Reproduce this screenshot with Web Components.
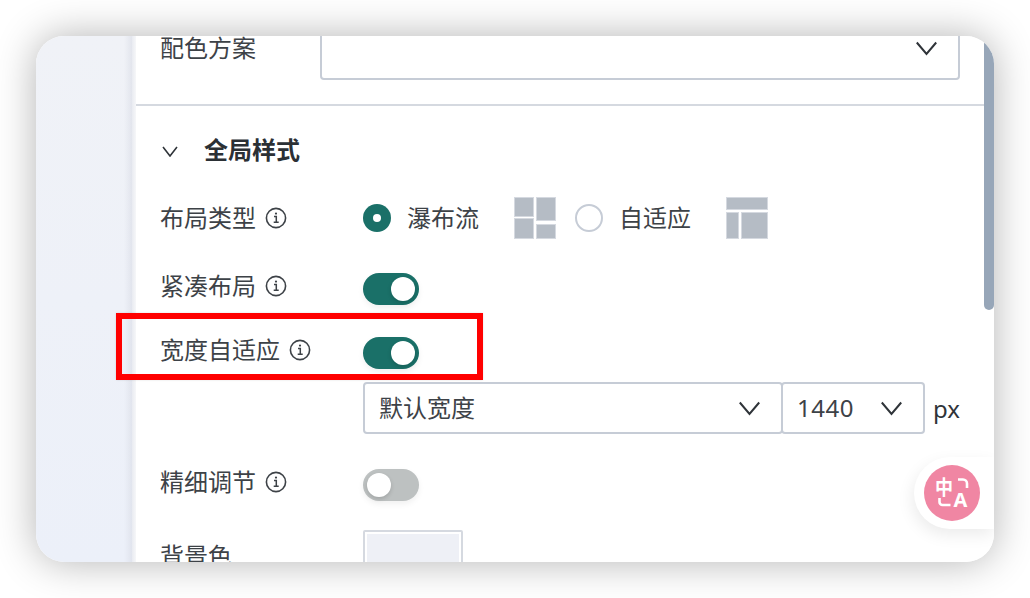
<!DOCTYPE html>
<html lang="zh">
<head>
<meta charset="utf-8">
<title>全局样式</title>
<style>
  html, body { margin: 0; padding: 0; background: #fff; }
  body { font-family: "Noto Sans", "Noto Sans CJK SC", sans-serif; color: #3d4247; overflow: hidden; width: 1030px; height: 598px; }
</style>
</head>
<body>
<app-window>
  <settings-panel>
    <config-row class="top" label="配色方案" style="--label-w:160px;--label-top:0px">
      <select-box width="640" height="64"></select-box>
    </config-row>
    <section-head title="全局样式"></section-head>
    <config-row label="布局类型" info style="--label-top:0px">
      <radio-option checked text="瀑布流">
        <svg width="42" height="42" viewBox="0 0 42 42">
          <g fill="#b5bcc5" stroke="#d5d9e0" stroke-width="1">
            <rect x=".5" y=".5" width="19" height="19"/>
            <rect x="22.5" y=".5" width="19" height="23"/>
            <rect x=".5" y="21.5" width="19" height="20"/>
            <rect x="22.5" y="27.5" width="19" height="14"/>
          </g>
        </svg>
      </radio-option>
      <radio-option text="自适应" style="margin-left:19px">
        <svg width="42" height="42" viewBox="0 0 42 42" style="margin-left:35px">
          <g fill="#b5bcc5" stroke="#d5d9e0" stroke-width="1">
            <rect x=".5" y=".5" width="41" height="12"/>
            <rect x=".5" y="15.5" width="12" height="26"/>
            <rect x="15.5" y="15.5" width="26" height="26"/>
          </g>
        </svg>
      </radio-option>
    </config-row>
    <config-row label="紧凑布局" info style="margin-top:33px"><toggle-switch on></toggle-switch></config-row>
    <config-row label="宽度自适应" info style="margin-top:32px"><toggle-switch on></toggle-switch></config-row>
    <config-row style="margin-top:13px">
      <select-box width="420" height="52" text="默认宽度"></select-box>
      <select-box width="144" height="52" text="1440" style="margin-left:-2px;letter-spacing:.5px"></select-box>
      <span style="margin-left:8px;font-size:24px;color:#2f3439">px</span>
    </config-row>
    <config-row label="精细调节" info style="margin-top:35px"><toggle-switch></toggle-switch></config-row>
    <config-row label="背景色" style="margin-top:29px;--label-top:0px"><color-swatch></color-swatch></config-row>
  </settings-panel>
  <translate-fab></translate-fab>
</app-window>
<mark-box></mark-box>

<script>
const CHEVRON = `<svg width="22" height="15" viewBox="0 0 22 15" fill="none" stroke="#2f3439" stroke-width="2"><path d="M.8 1.5 10.5 13 20.2 1.5"/></svg>`;

class AppWindow extends HTMLElement {
  constructor() { super(); this.attachShadow({ mode: 'open' }); }
  connectedCallback() {
    this.shadowRoot.innerHTML = `
    <style>
      :host { display: flex; position: absolute; left: 36px; top: 36px; width: 958px; height: 526px; border-radius: 28px; background: #fff; box-shadow: 0 0 40px rgba(0,0,0,.3); }
      .clip { display: flex; flex: 1; min-width: 0; border-radius: 28px; overflow: hidden; position: relative; }
      .rail { width: 96px; flex: none; background: linear-gradient(90deg, transparent 88px, rgba(215,218,228,.55) 96px), linear-gradient(#f0f2f7, #ecf0f9); }
      .main { flex: 1; min-width: 0; overflow: hidden; background: linear-gradient(90deg, #e9ebf1, #f6f7f9 4px, #fff 4px); padding-left: 4px; }
      .bar { width: 10px; flex: none; position: absolute; right: 0; top: 0; height: 274px; background: #97a6b8; border-radius: 0 0 5px 5px; }
    </style>
    <div class="clip">
      <div class="rail"></div>
      <div class="main"><slot></slot></div>
      <div class="bar"></div>
    </div>`;
  }
}

class SettingsPanel extends HTMLElement {
  constructor() { super(); this.attachShadow({ mode: 'open' }); }
  connectedCallback() {
    this.shadowRoot.innerHTML = `
    <style>
      :host { display: block; padding: 0 24px; margin-top: -20px; }
    </style>
    <slot></slot>`;
  }
}

class ConfigRow extends HTMLElement {
  constructor() { super(); this.attachShadow({ mode: 'open' }); }
  connectedCallback() {
    const label = this.getAttribute('label') || '';
    const info = this.hasAttribute('info') ? `<svg class="info" width="22" height="22" viewBox="0 0 22 22" fill="none" stroke="#3d4247"><circle cx="11" cy="11" r="9.6" stroke-width="1.6"/><path d="M9 9.6h2.3v5.4M8.7 15.2h5" stroke-width="1.5"/><circle cx="11" cy="6.6" r="1.1" fill="#3d4247" stroke="none"/></svg>` : '';
    this.shadowRoot.innerHTML = `
    <style>
      :host { display: flex; align-items: center; }
      .label { width: var(--label-w, 203px); flex: none; display: flex; align-items: center; gap: 9px; font-size: 24px; line-height: 32px; color: #3d4247; position: relative; top: var(--label-top, -3px); }
      .ctl { display: flex; align-items: center; flex: 1; min-width: 0; }
    </style>
    <div class="label">${label ? `<span>${label}</span>` : ''}${info}</div>
    <div class="ctl"><slot></slot></div>`;
    if (this.classList.contains('top')) {
      this.style.paddingBottom = '24px';
    }
  }
}

class SectionHead extends HTMLElement {
  constructor() { super(); this.attachShadow({ mode: 'open' }); }
  connectedCallback() {
    this.shadowRoot.innerHTML = `
    <style>
      :host { display: flex; align-items: center; height: 90px; margin: 0 -24px; padding: 0 24px; border-top: 2px solid #d5d9e0; box-sizing: content-box; }
      svg { margin-left: 2px; flex: none; }
      h3 { margin: 0 0 0 26px; font-size: 24px; line-height: 32px; font-weight: 700; color: #2b3035; position: relative; top: -1px; }
    </style>
    <svg width="16" height="11" viewBox="0 0 16 11" fill="none" stroke="#2f3439" stroke-width="1.6"><path d="M1 1 8 10 15 1"/></svg>
    <h3>${this.getAttribute('title')}</h3>`;
  }
}

class RadioOption extends HTMLElement {
  constructor() { super(); this.attachShadow({ mode: 'open' }); }
  connectedCallback() {
    const on = this.hasAttribute('checked');
    this.shadowRoot.innerHTML = `
    <style>
      :host { display: inline-flex; align-items: center; height: 44px; }
      .dot { width: 28px; height: 28px; border-radius: 50%; box-sizing: border-box; flex: none; }
      .on { background: #1a7068; display: flex; align-items: center; justify-content: center; }
      .on::after { content: ""; width: 8px; height: 8px; border-radius: 50%; background: #fff; }
      .off { border: 2px solid #c6ccd6; background: #fff; }
      span { margin: 0 35px 0 16px; font-size: 24px; line-height: 32px; color: #3d4247; white-space: nowrap; }
      .t2 { margin: 0 0 0 16px; }
      ::slotted(svg) { flex: none; }
    </style>
    <div class="dot ${on ? 'on' : 'off'}"></div>
    <span class="${on ? '' : 't2'}">${this.getAttribute('text')}</span>
    <slot></slot>`;
  }
}

class ToggleSwitch extends HTMLElement {
  constructor() { super(); this.attachShadow({ mode: 'open' }); }
  connectedCallback() {
    const on = this.hasAttribute('on');
    this.shadowRoot.innerHTML = `
    <style>
      :host { display: flex; align-items: center; width: 56px; height: 32px; padding: 0 4px; box-sizing: border-box; border-radius: 16px; flex: none;
        background: ${on ? '#1a7068' : '#bdc1c1'}; justify-content: ${on ? 'flex-end' : 'flex-start'}; box-shadow: 0 3px 6px rgba(0,0,0,.06); }
      i { display: block; width: 24px; height: 24px; border-radius: 50%; background: #fff; box-shadow: 0 2px 4px rgba(0,0,0,.15); }
    </style>
    <i></i>`;
  }
}

class SelectBox extends HTMLElement {
  constructor() { super(); this.attachShadow({ mode: 'open' }); }
  connectedCallback() {
    const w = this.getAttribute('width'), h = this.getAttribute('height');
    this.shadowRoot.innerHTML = `
    <style>
      :host { display: flex; align-items: center; justify-content: space-between; width: ${w}px; height: ${h}px; box-sizing: border-box; border: 2px solid #c6ccd6; border-radius: 4px; padding: 0 20px 0 14px; flex: none; background: #fff; }
      span { font-size: 24px; line-height: 32px; color: #3d4247; }
      svg { display: block; flex: none; }
    </style>
    <span>${this.getAttribute('text') || ''}</span>
    ${CHEVRON}`;
  }
}

class ColorSwatch extends HTMLElement {
  constructor() { super(); this.attachShadow({ mode: 'open' }); }
  connectedCallback() {
    this.shadowRoot.innerHTML = `
    <style>
      :host { display: block; width: 100px; height: 52px; box-sizing: border-box; border: 2px solid #d5d9e0; border-radius: 2px; padding: 2px; background: #fff; }
      div { height: 100%; background: #eef0f6; }
    </style>
    <div></div>`;
  }
}

class TranslateFab extends HTMLElement {
  constructor() { super(); this.attachShadow({ mode: 'open' }); }
  connectedCallback() {
    this.shadowRoot.innerHTML = `
    <style>
      :host { position: absolute; right: 0; top: 421px; width: 80px; height: 72px; box-sizing: border-box; padding: 8px 0 8px 10px; background: #fff; border-radius: 36px 0 0 36px; box-shadow: -2px 6px 16px rgba(0,0,0,.08); }
      .c { display: block; width: 56px; height: 56px; }
      text { fill: #fff; font-weight: 700; }
    </style>
    <svg class="c" viewBox="0 0 56 56">
      <circle cx="28" cy="28" r="28" fill="#f086a3"/>
      <text transform="translate(11 30) scale(1 1.14)" font-size="18" style="font-family:'Noto Sans CJK SC',sans-serif">中</text>
      <text x="29.5" y="42" font-size="20" style="font-family:'Noto Sans',sans-serif">A</text>
      <path d="M34 14.5h5a4 4 0 0 1 4 4v4.5M15.5 33v4a3 3 0 0 0 3 3h8" fill="none" stroke="#fff" stroke-width="2.6"/>
    </svg>`;
  }
}

class MarkBox extends HTMLElement {
  constructor() { super(); this.attachShadow({ mode: 'open' }); }
  connectedCallback() {
    this.shadowRoot.innerHTML = `
    <style>
      :host { position: absolute; left: 116px; top: 313px; width: 367px; height: 67px; box-sizing: border-box; border: 6px solid #f00; box-shadow: 0 0 2px rgba(0,0,0,.12); pointer-events: none; }
    </style>`;
  }
}

customElements.define('app-window', AppWindow);
customElements.define('settings-panel', SettingsPanel);
customElements.define('config-row', ConfigRow);
customElements.define('section-head', SectionHead);
customElements.define('radio-option', RadioOption);
customElements.define('toggle-switch', ToggleSwitch);
customElements.define('select-box', SelectBox);
customElements.define('color-swatch', ColorSwatch);
customElements.define('translate-fab', TranslateFab);
customElements.define('mark-box', MarkBox);
</script>
</body>
</html>
